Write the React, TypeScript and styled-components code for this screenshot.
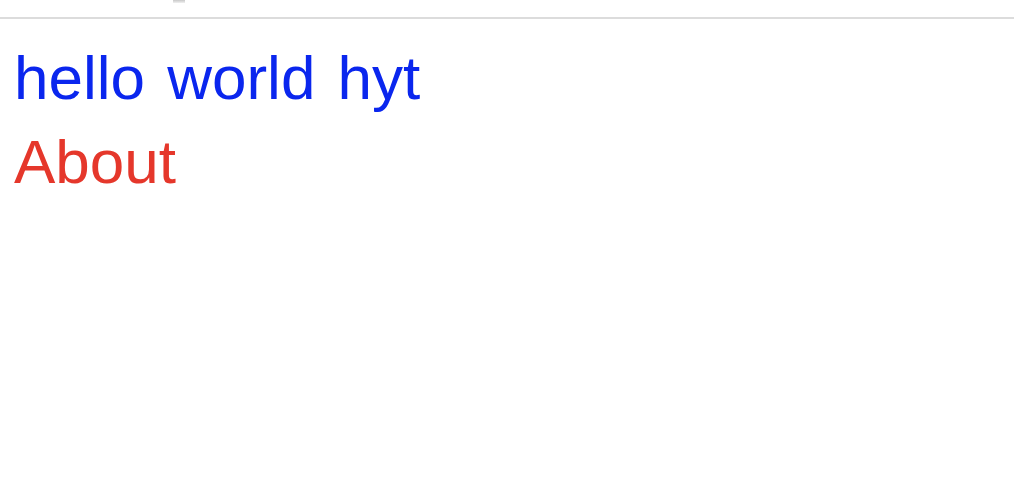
import React from "react";
import styled, { createGlobalStyle } from "styled-components";

const Global = createGlobalStyle`
  html, body { margin: 0; padding: 0; background: #ffffff; }
  body { font-family: "Liberation Sans", Arial, sans-serif; }
`;

const Page = styled.div`
  display: flex;
  flex-direction: column;
  width: 1014px;
  height: 486px;
  background: #ffffff;
  overflow: hidden;
`;

const TopBar = styled.div`
  height: 17px;
  border-bottom: 2px solid #dcdcdc;
  display: flex;
  align-items: flex-start;
  padding-left: 173px;
`;

const TabEdge = styled.div`
  width: 12px;
  height: 3px;
  background: linear-gradient(#c8c8c8, #f0f0f0);
`;

const Content = styled.main`
  display: flex;
  flex-direction: column;
  align-items: flex-start;
  padding: 17px 0 0 14px;
`;

const Line = styled.div<{ $color: string }>`
  font-family: "Liberation Sans", Arial, sans-serif;
  font-size: 62px;
  line-height: 84px;
  word-spacing: 5px;
  color: ${(p) => p.$color};
  white-space: nowrap;
`;

export default function App() {
  return (
    <Page>
      <Global />
      <TopBar>
        <TabEdge />
      </TopBar>
      <Content>
        <Line $color="#0a26ee">hello world hyt</Line>
        <Line $color="#e5372b">About</Line>
      </Content>
    </Page>
  );
}
